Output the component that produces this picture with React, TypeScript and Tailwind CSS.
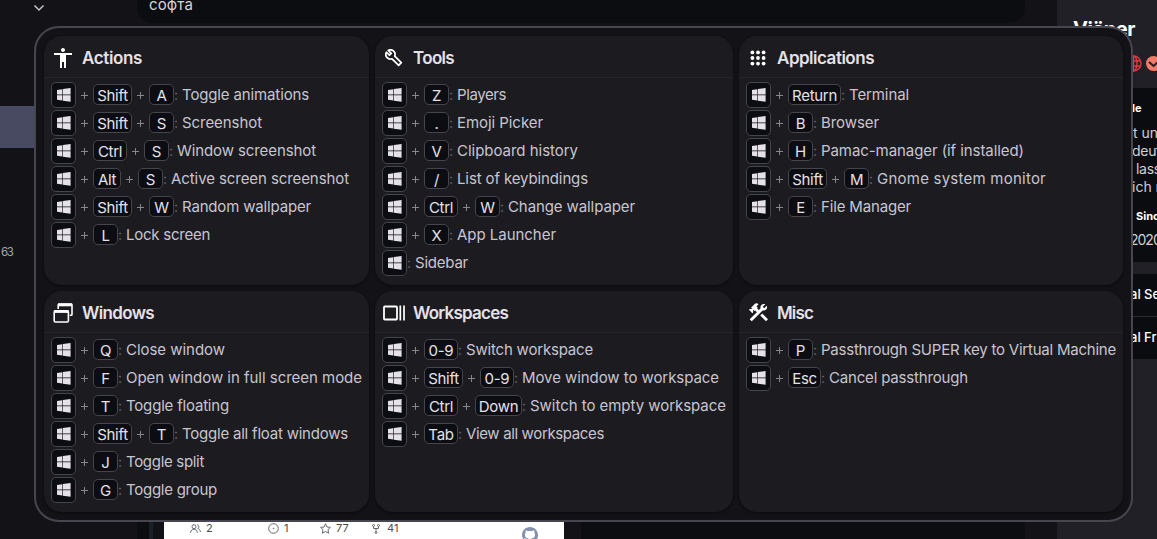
import { useLayoutEffect, useRef, type ReactNode } from "react";
import { MdAccessibility, MdConstruction } from "react-icons/md";

type Bind = { keys: [string, string][]; label: string; w: number };

const S: [string, string] = ["Shift", "w-[39px]"];
const C: [string, string] = ["Ctrl", "w-[34px]"];
const N: [string, string] = ["0-9", "w-[34px]"];
const k = (c: string): [string, string] => [c, "w-[25px]"];
const b = (keys: [string, string][], label: string, w: number): Bind => ({ keys, label, w });

/* Text set to a measured width by spreading the difference over its letters. */
function Fit({ text, w, className = "" }: { text: string; w: number; className?: string }) {
  const ref = useRef<HTMLSpanElement>(null);
  useLayoutEffect(() => {
    const el = ref.current;
    if (!el) return;
    el.style.letterSpacing = "0px";
    const natural = el.getBoundingClientRect().width;
    el.style.letterSpacing = `${(w - natural) / text.length}px`;
  }, [text, w]);
  return (
    <span ref={ref} className={`inline-block whitespace-pre ${className}`}>
      {text}
    </span>
  );
}

function WinKey() {
  return (
    <span className="flex h-[26px] w-[25px] shrink-0 items-center justify-center rounded-[5px] border border-[#45454b] bg-[#0c0d12]">
      <svg width="14" height="14" viewBox="0 0 14 14" fill="#e5e1e9">
        <path d="M0 2l5.3-.8v5.4H0zM5.9 1.1L13.6 0v6.6H5.9zM0 7.3h5.3v5.3L0 11.8zM5.9 7.3h7.7v6.5l-7.7-1.1z" />
      </svg>
    </span>
  );
}

function Row({ bind }: { bind: Bind }) {
  return (
    <div className="flex h-7 items-center">
      <WinKey />
      {bind.keys.map(([name, width], i) => (
        <span key={i} className="mb-px flex items-center">
          <span className="flex w-[17px] justify-center pt-px">
            <svg width="8" height="8" viewBox="0 0 8 8" stroke="#87868e" strokeWidth="1">
              <path d="M0 4.5h7M3.5 1v7" />
            </svg>
          </span>
          <span className={`flex h-[21px] items-center justify-center whitespace-nowrap rounded-[5px] border border-[#45454b] bg-[#0c0d12] pt-px text-[15px] leading-none tracking-[-0.3px] text-[#e5e1e9] ${width}`}>
            {name}
          </span>
        </span>
      ))}
      <span className="w-[8px] shrink-0 text-[14px] leading-none text-[#6b6a72]">:</span>
      <Fit text={bind.label} w={bind.w} className="text-[15px] leading-5 text-[#c8c5d0]" />
    </div>
  );
}

function Card({ title, tw, icon, binds }: { title: string; tw: number; icon: ReactNode; binds: Bind[] }) {
  return (
    <section className="rounded-[18px] bg-[#1c1b20] shadow-[0_1px_3px_rgba(0,0,0,0.5)]">
      <header className="flex h-[42px] items-center border-b border-[#26252b] pl-2 text-white">
        <span className="flex w-[22px] shrink-0 justify-center pt-[2px]">{icon}</span>
        <Fit text={title} w={tw} className="mt-[2px] ml-2 text-[17px] leading-6 font-semibold text-[#e5e1e9]" />
      </header>
      <div className="pt-[3px] pl-[7px]">
        {binds.map((x) => (
          <Row key={x.label} bind={x} />
        ))}
      </div>
    </section>
  );
}

const AppsIcon = () => (
  <svg width="16" height="16" viewBox="0 0 16 16" fill="white">
    {[2.4, 8, 13.6].map((y) => [2.4, 8, 13.6].map((x) => <circle key={`${x}-${y}`} cx={x} cy={y} r="1.9" />))}
  </svg>
);
const WrenchIcon = () => (
  <svg width="18" height="18" viewBox="0 0 25 25" fill="none" stroke="white" strokeWidth="2.4" strokeLinejoin="round">
    <path d="M22.600 19l-9.100-9.100c.93-2.340.45-5.100-1.440-7C9.800.9 6.700.8 4.500 2L8.600 6.100 6.100 8.600 2 4.500C.8 6.700.9 9.900 2.900 12.100c1.860 1.860 4.570 2.350 6.890 1.480l9.200 9.200z" />
  </svg>
);
const WindowsIcon = () => (
  <svg width="20" height="20" viewBox="0 0 20 20" fill="none" stroke="white" strokeWidth="1.6">
    <rect x="1.200" y="7.800" width="14.200" height="11.200" rx="1.200" />
    <path d="M1 8.500h14.500" strokeWidth="2.800" />
    <path d="M5.200 6V1.800q0-.8.8-.8h12.200q.8 0 .8.8v9.600q0 .8-.8.8h-1.400" />
    <path d="M5 1.900h14" strokeWidth="2.800" />
  </svg>
);
const SpacesIcon = () => (
  <svg width="22" height="16" viewBox="0 0 22 16" fill="none" stroke="white">
    <rect x="1" y="1.500" width="13" height="13" rx=".8" strokeWidth="1.800" />
    <path d="M17.300.5v15M21 .5v15" strokeWidth="1.700" />
  </svg>
);

const actions = [
  b([S, k("A")], "Toggle animations", 127),
  b([S, k("S")], "Screenshot", 80),
  b([C, k("S")], "Window screenshot", 139),
  b([["Alt", "w-[28px]"], k("S")], "Active screen screenshot", 178),
  b([S, k("W")], "Random wallpaper", 129),
  b([k("L")], "Lock screen", 84),
];
const tools = [
  b([k("Z")], "Players", 49),
  b([k(".")], "Emoji Picker", 86),
  b([k("V")], "Clipboard history", 121),
  b([k("/")], "List of keybindings", 131),
  b([C, k("W")], "Change wallpaper", 127),
  b([k("X")], "App Launcher", 99),
  b([], "Sidebar", 53),
];
const apps = [
  b([["Return", "w-[53px]"]], "Terminal", 60),
  b([k("B")], "Browser", 58),
  b([k("H")], "Pamac-manager (if installed)", 203),
  b([S, k("M")], "Gnome system monitor", 169),
  b([k("E")], "File Manager", 90),
];
const windows = [
  b([k("Q")], "Close window", 99),
  b([k("F")], "Open window in full screen mode", 236),
  b([k("T")], "Toggle floating", 103),
  b([S, k("T")], "Toggle all float windows", 166),
  b([k("J")], "Toggle split", 78),
  b([k("G")], "Toggle group", 91),
];
const spaces = [
  b([N], "Switch workspace", 127),
  b([S, N], "Move window to workspace", 197),
  b([C, ["Down", "w-[47px]"]], "Switch to empty workspace", 196),
  b([["Tab", "w-[34px]"]], "View all workspaces", 138),
];
const misc = [
  b([k("P")], "Passthrough SUPER key to Virtual Machine", 295),
  b([["Esc", "w-[33px]"]], "Cancel passthrough", 139),
];

function Backdrop() {
  return (
    <div className="flex h-full">
      <aside className="flex w-[137px] flex-col">
        <div className="flex h-[106px] justify-end pt-1 pr-[92px]">
          <svg width="12" height="8" viewBox="0 0 12 8" fill="none" stroke="#c5c3cc" strokeWidth="1.5">
            <path d="M1.500 1.500L6 6l4.500-4.500" />
          </svg>
        </div>
        <div className="h-[42px] bg-[#474a60]" />
        <div className="mt-[96px] pl-px text-[11.500px] leading-[17px] tracking-[-1.5px] text-[#a5a4ab]">63</div>
      </aside>
      <main className="flex w-[920px] flex-col justify-between">
        <div className="h-[23px] w-[888px] rounded-b-[16px] bg-[#0c0d11] pl-3 text-[15px] leading-[10px] text-[#d5d4d8]">
          <Fit text="софта" w={44} />
        </div>
        <div className="flex h-[18px] w-[888px] bg-[#0c0d11]">
          <div className="w-[12px]" />
          <div className="w-[4px] bg-[#1a2126]" />
          <div className="w-[11px] bg-[#111216]" />
          <div className="flex w-[400px] items-center bg-white pb-[3px] pl-[26px] text-[11px] leading-none text-[#4a4d52]">
            <div className="flex w-[78px] items-center gap-[5px]">
              <svg width="11" height="9" viewBox="0 0 11 9" fill="none" stroke="#666b70" strokeWidth="1">
                <circle cx="4" cy="2.7" r="2" />
                <path d="M.6 8.8C1 3.900 7 3.900 7.400 8.800M7 .8c2.300 0 2.300 3.200.8 3.600 1.500.4 2.400 1.800 2.600 3.600" />
              </svg>
              2
            </div>
            <div className="flex w-[52px] items-center gap-[5px]">
              <svg width="11" height="11" viewBox="0 0 11 11" fill="none" stroke="#666b70">
                <circle cx="5.500" cy="5.500" r="4.800" />
                <circle cx="5.500" cy="5.500" r=".4" />
              </svg>
              1
            </div>
            <div className="flex w-[52px] items-center gap-[5px]">
              <svg width="11" height="11" viewBox="0 0 11 11" fill="none" stroke="#666b70">
                <path d="M5.500.8L7 4l3.400.4L8 6.700l.6 3.500-3.100-1.700-3.100 1.700L3 6.700.6 4.400 4 4z" />
              </svg>
              77
            </div>
            <div className="flex w-[149px] items-center gap-[7px]">
              <svg width="8" height="10" viewBox="0 0 8 10" fill="none" stroke="#666b70">
                <circle cx="1.500" cy="1.500" r="1" />
                <circle cx="6.500" cy="1.500" r="1" />
                <circle cx="4" cy="8.500" r="1" />
                <path d="M1.500 2.500v2h5v-2M4 4.500v3" />
              </svg>
              41
            </div>
            <svg className="mt-[13px] ml-px shrink-0" width="16" height="16" viewBox="0 0 16 16" fill="#8490ad">
              <path d="M8 0C3.580 0 0 3.580 0 8c0 3.540 2.290 6.530 5.470 7.590.4.070.55-.17.55-.38 0-.19-.01-.82-.01-1.490-2.010.37-2.530-.49-2.690-.94-.09-.23-.48-.94-.82-1.130-.28-.15-.68-.52-.01-.53.63-.01 1.080.58 1.230.82.72 1.210 1.870.87 2.330.66.07-.52.28-.87.51-1.070-1.780-.2-3.640-.89-3.640-3.950 0-.87.31-1.590.82-2.150-.08-.2-.36-1.020.08-2.120 0 0 .67-.21 2.200.82a7.600 7.600 0 014 0c1.530-1.040 2.200-.82 2.200-.82.44 1.100.16 1.920.08 2.120.51.56.82 1.270.82 2.150 0 3.070-1.870 3.750-3.650 3.950.29.25.54.73.54 1.480 0 1.070-.01 1.930-.01 2.200 0 .21.15.46.55.38A8 8 0 0016 8c0-4.420-3.580-8-8-8z" />
            </svg>
          </div>
          <div className="w-[17px] bg-[#131217]" />
        </div>
      </main>
      <aside className="w-[100px] overflow-hidden bg-[#212026]">
        <div className="h-[88px] pt-[17px] pl-4">
          <div className="text-[20px] leading-6 font-bold text-white">
            <Fit text="Viäner" w={62} />
          </div>
          <div className="flex items-center gap-1 pt-[14px] pl-[52px]">
            <svg className="shrink-0" width="17" height="17" viewBox="0 0 17 17" fill="none" stroke="#e5383f" strokeWidth="1.400">
              <circle cx="8.500" cy="8.500" r="7.500" />
              <ellipse cx="8.500" cy="8.500" rx="3.500" ry="7.500" />
              <path d="M1.500 6h14M1.500 11h14M8.500 1v15" />
            </svg>
            <svg className="shrink-0" width="15" height="15" viewBox="0 0 15 15">
              <circle cx="7.500" cy="7.500" r="7.500" fill="#f47b67" />
              <path d="M3 6l4.500 4L12 6" fill="none" stroke="#212026" strokeWidth="2" />
            </svg>
          </div>
        </div>
        <div className="h-[174px] bg-[#0b0c10] text-[14px] leading-[18px] whitespace-nowrap text-[#d0d0d4]">
          <p className="pt-[11px] pl-[75px] text-[11px] font-bold text-white">le</p>
          <p className="pt-[7px] pl-[76px]">t un</p>
          <p className="pl-[75px] tracking-[-0.3px]">deut</p>
          <p className="pl-[79px] tracking-[-0.3px]">lass</p>
          <p className="pl-[75px]">ich n</p>
          <p className="pt-[11px] pl-[79px] text-[11px] font-bold text-white">Sinc</p>
          <p className="pt-[6px] pl-[73px] tracking-[-1px]">2020</p>
        </div>
        <div className="mt-3 h-[85px] bg-[#0b0c10] pl-[73px] text-[13px] font-medium whitespace-nowrap text-white">
          <p className="h-[43px] border-b border-[#2b2b31] leading-[41px]">al Se</p>
          <p className="leading-[41px]">al Fr</p>
        </div>
      </aside>
    </div>
  );
}

export default function App() {
  return (
    <div className="relative h-[539px] w-[1157px] overflow-hidden bg-[#131217] font-['Inter','Noto_Sans',sans-serif]">
      <Backdrop />
      <div className="absolute top-[26px] left-[34px] grid h-[496px] w-[1099px] grid-cols-[325px_358px_384px] grid-rows-[249px_221px] gap-1.5 rounded-[25px] border-2 border-[#47464f] bg-[#131217] p-2">
        <Card title="Actions" tw={60} icon={<MdAccessibility size={24} className="shrink-0" />} binds={actions} />
        <Card title="Tools" tw={41} icon={<WrenchIcon />} binds={tools} />
        <Card title="Applications" tw={97} icon={<AppsIcon />} binds={apps} />
        <Card title="Windows" tw={72} icon={<WindowsIcon />} binds={windows} />
        <Card title="Workspaces" tw={95} icon={<SpacesIcon />} binds={spaces} />
        <Card title="Misc" tw={36} icon={<MdConstruction size={23} className="shrink-0" />} binds={misc} />
      </div>
    </div>
  );
}
